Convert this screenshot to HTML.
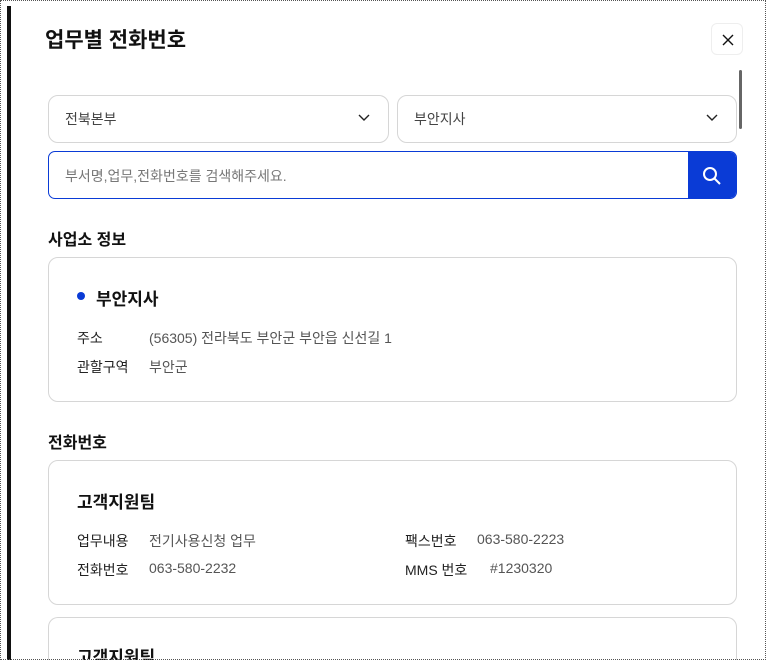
<!DOCTYPE html>
<html style="overflow:hidden;height:660px"><head><meta charset="utf-8"><style>
*{box-sizing:border-box;margin:0;padding:0}
body{width:766px;height:660px;overflow:hidden;background:#fff;font-family:"Liberation Sans","Noto Sans CJK KR",sans-serif;color:#111;position:relative}
.wrap{position:absolute;left:0;top:0;width:766px;height:660px;overflow:hidden}
.frame{position:absolute;left:0;top:0;width:766px;height:660px;border:1px dotted #555}
.bar{position:absolute;left:7px;top:6px;width:4px;height:654px;background:#111}
.a{position:absolute}
.box{position:absolute;border:1px solid #d6d6d6;border-radius:10px;background:#fff}
.sel{font-size:14px;color:#444;padding:13px 16px;line-height:20px}
.chev{position:absolute;right:18px;top:18px}
.lbl{font-size:14px;color:#222}
.val{font-size:14px;color:#555}
</style></head><body><div class="wrap">
<div class="bar"></div>
<div class="a" style="left:45px;top:24px;font-size:21px;font-weight:bold;">업무별 전화번호</div>
<div class="box" style="left:711px;top:23px;width:32px;height:32px;border-radius:6px;border-color:#eee"><svg class="a" style="left:10px;top:10px" width="12" height="12"><path d="M1 1L11 11M11 1L1 11" stroke="#111" stroke-width="1.4"/></svg></div>
<div class="a" style="left:739px;top:70px;width:3px;height:59px;background:#666;border-radius:2px"></div>
<div class="box sel" style="left:48px;top:95px;width:341px;height:48px">전북본부<svg class="chev" width="12" height="8"><path d="M1 1L6 6L11 1" stroke="#222" stroke-width="1.4" fill="none"/></svg></div>
<div class="box sel" style="left:397px;top:95px;width:340px;height:48px">부안지사<svg class="chev" width="12" height="8"><path d="M1 1L6 6L11 1" stroke="#222" stroke-width="1.4" fill="none"/></svg></div>
<div class="box" style="left:48px;top:151px;width:689px;height:48px;border-color:#0a3bd6;border-radius:7px;overflow:hidden">
<div class="a" style="left:16px;top:14px;font-size:14px;color:#777">부서명,업무,전화번호를 검색해주세요.</div>
<div class="a" style="right:0;top:0;width:48px;height:48px;background:#0a3bd6"><svg class="a" style="left:14px;top:14px" width="20" height="20"><circle cx="8" cy="8" r="6" stroke="#fff" stroke-width="2" fill="none"/><path d="M12.5 12.5L18 18" stroke="#fff" stroke-width="2"/></svg></div></div>
<div class="a" style="left:48px;top:226px;font-size:16px;font-weight:bold">사업소 정보</div>
<div class="box" style="left:48px;top:257px;width:689px;height:145px">
<div class="a" style="left:28px;top:34px;width:8px;height:8px;border-radius:50%;background:#0a3bd6"></div>
<div class="a" style="left:47px;top:27px;font-size:17px;font-weight:bold">부안지사</div>
<div class="a lbl" style="left:28px;top:70px">주소</div><div class="a val" style="left:100px;top:70px">(56305) 전라북도 부안군 부안읍 신선길 1</div>
<div class="a lbl" style="left:28px;top:99px">관할구역</div><div class="a val" style="left:100px;top:99px">부안군</div>
</div>
<div class="a" style="left:48px;top:429px;font-size:16px;font-weight:bold">전화번호</div>
<div class="box" style="left:48px;top:460px;width:689px;height:145px">
<div class="a" style="left:28px;top:27px;font-size:17px;font-weight:bold">고객지원팀</div>
<div class="a lbl" style="left:28px;top:70px">업무내용</div><div class="a val" style="left:100px;top:70px">전기사용신청 업무</div>
<div class="a lbl" style="left:28px;top:99px">전화번호</div><div class="a val" style="left:100px;top:99px">063-580-2232</div>
<div class="a lbl" style="left:356px;top:70px">팩스번호</div><div class="a val" style="left:428px;top:70px">063-580-2223</div>
<div class="a lbl" style="left:356px;top:99px">MMS 번호</div><div class="a val" style="left:441px;top:99px">#1230320</div>
</div>
<div class="box" style="left:48px;top:617px;width:689px;height:43px;border-bottom:none;border-radius:10px 10px 0 0;overflow:hidden">
<div class="a" style="left:28px;top:30px;font-size:17px;font-weight:bold;line-height:20px">고객지원팀</div></div>
<div class="frame"></div>
</div></body></html>
